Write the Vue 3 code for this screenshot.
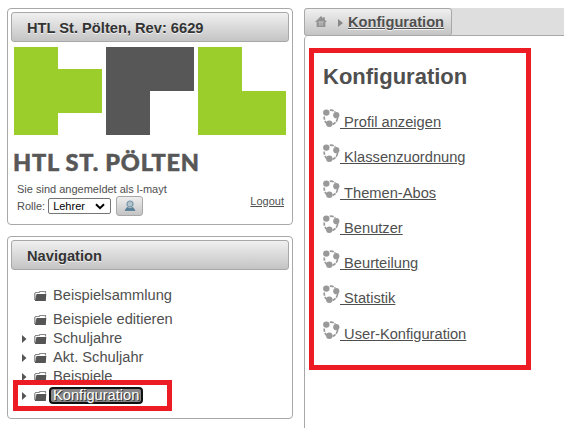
<script setup>
const navItems = [
  { label: 'Beispielsammlung', arrow: false, first: true },
  { label: 'Beispiele editieren', arrow: false },
  { label: 'Schuljahre', arrow: true },
  { label: 'Akt. Schuljahr', arrow: true },
  { label: 'Beispiele', arrow: true },
  { label: 'Konfiguration', arrow: true, active: true },
]
const links = ['Profil anzeigen', 'Klassenzuordnung', 'Themen-Abos', 'Benutzer', 'Beurteilung', 'Statistik', 'User-Konfiguration']
</script>

<template>
  <div class="page">
    <aside class="side">
      <section class="panel account">
        <h2 class="bar">HTL St. Pölten, Rev: 6629</h2>
        <svg class="logo" width="272" height="126" viewBox="0 0 272 126">
          <path fill="#9bce2b" d="M0 0H44V22H88V66H44V88H0zM184 0H228V44H272V88H184z" />
          <path fill="#575757" d="M92 0H180V44H136V88H92z" />
          <text x="-1" y="124" textLength="186" lengthAdjust="spacing">HTL ST. PÖLTEN</text>
        </svg>
        <div class="user">
          <div class="login">
            <div>Sie sind angemeldet als l-mayt</div>
            <div class="role">
              <span>Rolle:</span>
              <span class="select">Lehrer
                <svg width="10" height="7" viewBox="0 0 10 7"><path d="M1 1.2L5 5.2L9 1.2" fill="none" stroke="#000" stroke-width="2" /></svg>
              </span>
              <button class="person">
                <svg width="12" height="12" viewBox="0 0 12 12">
                  <circle cx="6" cy="4" r="3" fill="#b4c4cd" stroke="#7897aa" stroke-width="1.2" />
                  <path d="M1 10.5L3 7.500L6 8.500L9 7.500L11 10.500z" fill="#587f98" stroke="#587f98" stroke-width=".8" />
                </svg>
              </button>
            </div>
          </div>
          <a class="logout">Logout</a>
        </div>
      </section>

      <section class="panel navigation">
        <h2 class="bar">Navigation</h2>
        <ul class="tree">
          <li v-for="n in navItems" :key="n.label" :class="{ first: n.first }">
            <svg class="arrow" width="6" height="8" viewBox="0 0 6 8"><path v-if="n.arrow" d="M1 0L5.500 4L1 8z" fill="#555" /></svg>
            <svg class="folder" width="13" height="10" viewBox="0 0 13 10">
              <path d="M1 1.500H5L6 .5H11.500V2.500" fill="none" stroke="#888" stroke-width="1.200" />
              <path d="M0 2H1.500V6L.8 9H0z" fill="#999" />
              <path d="M2.500 3H12.300L11.800 10H.8z" fill="#555" />
            </svg>
            <span class="label" :class="{ active: n.active }">{{ n.label }}</span>
          </li>
        </ul>
        <div class="mark nav-mark"></div>
      </section>
    </aside>

    <main class="main">
      <header class="crumbs">
        <div class="crumb">
          <svg class="home" width="12" height="11" viewBox="0 0 11 10"><path d="M5.500 0L7.500 2V1H9V3.500L11 5.500H9.500V10H1.500V5.500H0z" fill="#929292" /><path d="M3 5.500H8M4.500 6V9M6.500 6V9" stroke="#ccc" stroke-width=".9" /></svg>
          <svg class="sep" width="5" height="8" viewBox="0 0 5 8"><path d="M0 0L5 4L0 8z" fill="#888" /></svg>
          <a>Konfiguration</a>
        </div>
      </header>
      <div class="content">
        <h1>Konfiguration</h1>
        <ul class="links">
          <li v-for="l in links" :key="l">
            <svg width="17" height="19" viewBox="0 0 17 19">
              <g fill="none" stroke="#999" stroke-width="1.700">
                <path d="M6.800 1.300Q10 .8 12.200 3" stroke-dasharray="4 1" />
                <path d="M1.200 7.500Q1 12 4.200 15" stroke-dasharray="3.300 1.200" />
                <path d="M14.600 9Q14 13.500 9.500 15.400" stroke-dasharray="4 1" />
              </g>
              <g fill="#999"><circle cx="3.300" cy="3.600" r="3.200" /><circle cx="13.300" cy="6.200" r="3.100" /><circle cx="6.300" cy="14.700" r="3.200" /></g>
            </svg>
            <a>&nbsp;{{ l }}</a>
          </li>
        </ul>
      </div>
      <div class="mark main-mark"></div>
    </main>
  </div>
</template>

<style>
body { margin: 0; background: #fff; overflow: hidden; }
</style>

<style scoped>
* { box-sizing: border-box; }
.page { display: flex; gap: 11px; width: 564px; height: 428px; padding: 8px 0 0 7px; font-family: "Liberation Sans", Arial, sans-serif; color: #4f4f4f; overflow: hidden; }
h1, h2, ul { margin: 0; padding: 0; list-style: none; }
.side { width: 286px; display: flex; flex-direction: column; gap: 11px; }
.panel { border: 1px solid #a8a8a8; border-radius: 4px; padding: 3px; position: relative; }
.account { height: 217px; }
.navigation { height: 183px; }
.bar { height: 30px; border: 1px solid #a8a8a8; border-radius: 3px; background: linear-gradient(#f0f0f0, #c4c4c4); padding-left: 15px; font-size: 14.67px; line-height: 30px; color: #333; text-shadow: 0 1px 0 rgba(255,255,255,.7); white-space: nowrap; }
.logo { display: block; margin: 5px 0 0 3px; overflow: visible; }
.logo text { font: 900 23.5px Lato, "Open Sans", sans-serif; fill: #575757; stroke: #575757; stroke-width: .5px; }
.user { display: flex; justify-content: space-between; padding: 9px 5px 0 6px; font-size: 11px; line-height: 14px; }
.role { display: flex; align-items: center; height: 20px; }
.select { display: flex; align-items: center; justify-content: space-between; width: 63px; height: 16px; border: 1px solid #767676; border-radius: 2px; margin: 0 5px 0 3px; padding: 0 5px 0 4px; color: #000; background: #fff; }
.person { display: flex; align-items: center; justify-content: center; width: 27px; height: 20px; padding: 0; border: 1px solid #a8a8a8; border-radius: 3px; background: linear-gradient(#eee, #c4c4c4); }
.logout { margin-top: 12px; text-decoration: underline; }
.tree { padding: 16px 0 0 10px; }
.tree li { display: flex; align-items: center; height: 19px; font-size: 14.67px; }
.tree li.first { margin-bottom: 5px; }
.folder { margin: 0 2px 0 7px; }
.label { height: 17px; line-height: 15px; padding: 0 3px; border: 1px solid transparent; border-radius: 4px; white-space: nowrap; }
.active { border: 2px solid #111; background: #888; color: #fff; line-height: 13px; text-shadow: 1px 1px 0 #333; padding: 0 2px; }
.mark { position: absolute; border: 5px solid #ed1c24; }
.nav-mark { left: 5px; top: 143px; width: 159px; height: 31px; }
.main { flex: 1; position: relative; display: flex; flex-direction: column; }
.crumbs { height: 28px; background: #dedede; border-bottom: 1px solid #a8a8a8; border-radius: 4px 0 0 4px; }
.crumb { display: flex; align-items: center; width: 148px; height: 28px; padding-left: 10px; border: 1px solid #a8a8a8; border-radius: 3px; background: linear-gradient(#f0f0f0, #c4c4c4); font-size: 14.67px; font-weight: bold; text-decoration: underline; text-shadow: 0 1px 0 rgba(255,255,255,.7); }
.home { margin-top: -1px; }
.sep { margin: 2px 5px 0 11px; }
.content { flex: 1; border-left: 1px solid #a8a8a8; border-top-left-radius: 4px; padding: 28px 0 0 18px; }
h1 { font-size: 22px; line-height: 26px; }
.links { padding-top: 17px; }
.links li { display: flex; align-items: flex-start; height: 35.25px; font-size: 14.67px; }
.links svg { margin: 2px 0 0 0; }
.links a { line-height: 17px; margin-top: 7px; text-decoration: underline; }
.main-mark { left: 5px; top: 40px; width: 222px; height: 322px; }
</style>
